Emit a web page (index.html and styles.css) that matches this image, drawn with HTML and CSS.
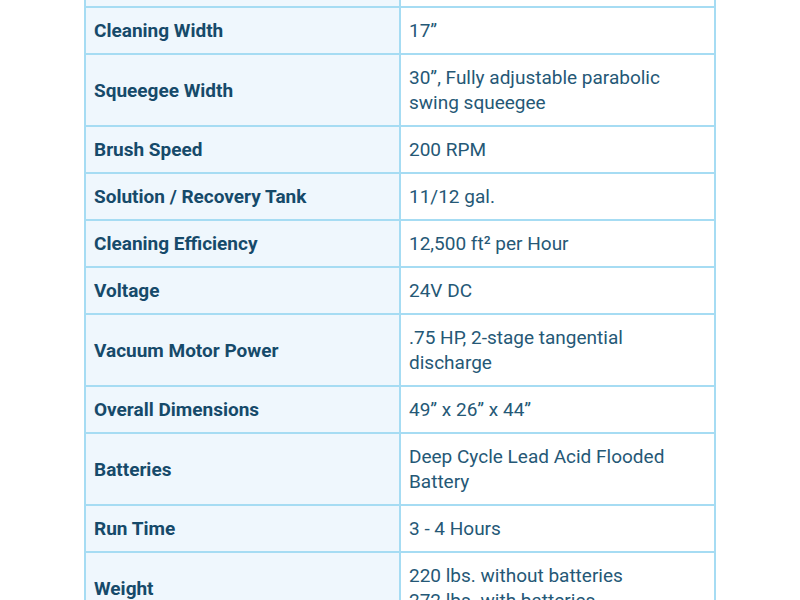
FILE: index.html
```html
<!DOCTYPE html>
<html>
<head>
<meta charset="utf-8">
<link rel="stylesheet" href="styles.css">
</head>
<body>
<table class="specs">
<tr class="spacer"><td class="label"></td><td class="value"></td></tr>
<tr><td class="label">Cleaning Width</td><td class="value">17”</td></tr>
<tr><td class="label">Squeegee Width</td><td class="value">30”, Fully adjustable parabolic swing squeegee</td></tr>
<tr><td class="label">Brush Speed</td><td class="value">200 RPM</td></tr>
<tr><td class="label">Solution / Recovery Tank</td><td class="value">11/12 gal.</td></tr>
<tr><td class="label">Cleaning Efficiency</td><td class="value">12,500 ft² per Hour</td></tr>
<tr><td class="label">Voltage</td><td class="value">24V DC</td></tr>
<tr><td class="label">Vacuum Motor Power</td><td class="value">.75 HP, 2-stage tangential discharge</td></tr>
<tr><td class="label">Overall Dimensions</td><td class="value">49” x 26” x 44”</td></tr>
<tr><td class="label">Batteries</td><td class="value">Deep Cycle Lead Acid Flooded Battery</td></tr>
<tr><td class="label">Run Time</td><td class="value">3 - 4 Hours</td></tr>
<tr><td class="label">Weight</td><td class="value">220 lbs. without batteries<br>272 lbs. with batteries</td></tr>
</table>
</body>
</html>
```
FILE: styles.css
```css
html, body {
  margin: 0;
  padding: 0;
  background: #ffffff;
}
body {
  font-family: Roboto, "Liberation Sans", sans-serif;
  font-size: 19px;
  line-height: 25px;
}
.specs {
  border-collapse: collapse;
  width: 632px;
  margin: -41px 0 0 84px;
  table-layout: fixed;
}
.specs td {
  border: 2px solid #a6dcf3;
  padding: 10px 8px;
  vertical-align: middle;
  width: 50%;
}
.spacer td {
  height: 25px;
}
.label {
  background: #eff7fd;
  color: #164a6a;
  font-weight: 700;
}
.value {
  background: #ffffff;
  color: #255876;
  font-weight: 400;
  padding-right: 20px;
}
```
